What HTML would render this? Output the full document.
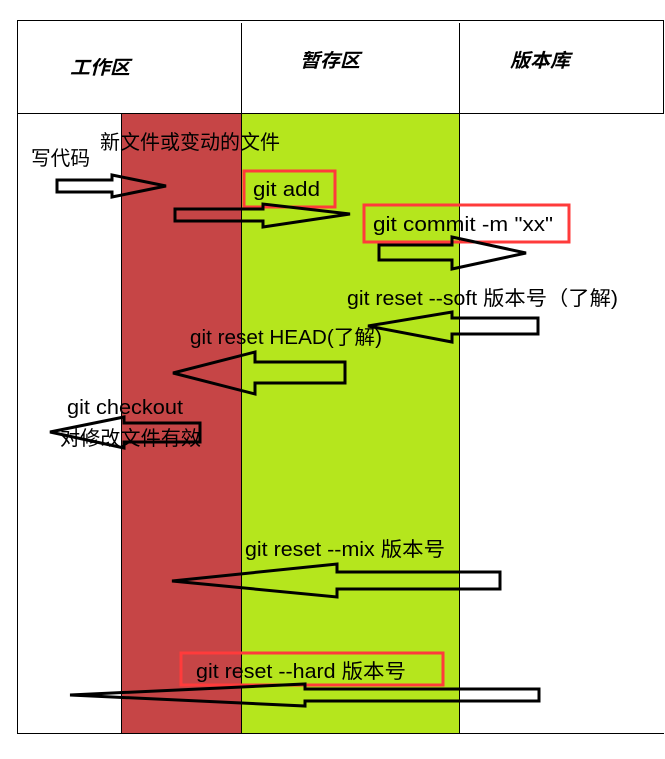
<!DOCTYPE html>
<html><head><meta charset="utf-8"><style>
html,body{margin:0;padding:0;background:#fff;width:665px;height:759px;overflow:hidden}
svg{display:block}
text{font-family:"Liberation Sans","Noto Sans CJK SC",sans-serif;font-size:20px;fill:#000}
.h{font-weight:bold;font-style:italic;font-size:19px}
</style></head><body>
<svg width="665" height="759" viewBox="0 0 665 759" xmlns="http://www.w3.org/2000/svg">
<rect x="121" y="113" width="120" height="620" fill="#c64546"/>
<rect x="241" y="113" width="218" height="620" fill="#b5e61d"/>
<g stroke="#000" stroke-width="1" fill="none">
<line x1="17" y1="20.5" x2="664" y2="20.5"/>
<line x1="17" y1="113.5" x2="664" y2="113.5"/>
<line x1="17" y1="733.5" x2="664" y2="733.5"/>
<line x1="17.5" y1="20" x2="17.5" y2="733"/>
<line x1="663.5" y1="20" x2="663.5" y2="113"/>
<line x1="241.5" y1="23" x2="241.5" y2="733"/>
<line x1="459.5" y1="23" x2="459.5" y2="733"/>
<line x1="121.5" y1="113" x2="121.5" y2="733"/>
</g>
<text class="h" x="70" y="74" textLength="60" lengthAdjust="spacingAndGlyphs">工作区</text>
<text class="h" x="300" y="67" textLength="60" lengthAdjust="spacingAndGlyphs">暂存区</text>
<text class="h" x="510" y="67" textLength="60" lengthAdjust="spacingAndGlyphs">版本库</text>
<g fill="none" stroke="#ff3b3b" stroke-width="3">
<rect x="244" y="171" width="91" height="36"/>
<rect x="364" y="205" width="205" height="37"/>
<rect x="181" y="653" width="262" height="32"/>
</g>
<g fill="none" stroke="#000" stroke-width="3" stroke-linejoin="miter">
<polygon points="57,180 112,180 112,175 166,186 112,197 112,192 57,192"/>
<polygon points="175,209 263,209 263,204 350,214 263,227 263,221 175,221"/>
<polygon points="379,245 452,245 452,237 526,253 452,269 452,260 379,260"/>
<polygon points="538,318 452,318 452,312 368,326 452,342 452,334 538,334"/>
<polygon points="345,362 255,362 255,352 173,373 255,394 255,383 345,383"/>
<polygon points="200,423 124,423 124,417 50,432 124,448 124,442 200,442"/>
<polygon points="500,572 337,572 337,564 172,581 337,597 337,589 500,589"/>
<polygon points="539,689 305,689 305,684 70,695 305,706 305,701 539,701"/>
</g>
<text x="100" y="149" textLength="180" lengthAdjust="spacingAndGlyphs">新文件或变动的文件</text>
<text x="31" y="165" textLength="59" lengthAdjust="spacingAndGlyphs">写代码</text>
<text x="253" y="196" textLength="67" lengthAdjust="spacingAndGlyphs">git add</text>
<text x="373" y="231" textLength="180" lengthAdjust="spacingAndGlyphs">git commit -m "xx"</text>
<text x="347" y="305" textLength="271" lengthAdjust="spacingAndGlyphs">git reset --soft 版本号（了解)</text>
<text x="190" y="344" textLength="192" lengthAdjust="spacingAndGlyphs">git reset HEAD(了解)</text>
<text x="67" y="414" textLength="116" lengthAdjust="spacingAndGlyphs">git checkout</text>
<text x="60" y="445" textLength="141" lengthAdjust="spacingAndGlyphs">对修改文件有效</text>
<text x="245" y="556" textLength="200" lengthAdjust="spacingAndGlyphs">git reset --mix 版本号</text>
<text x="196" y="678" textLength="210" lengthAdjust="spacingAndGlyphs">git reset --hard 版本号</text>
</svg>
</body></html>
